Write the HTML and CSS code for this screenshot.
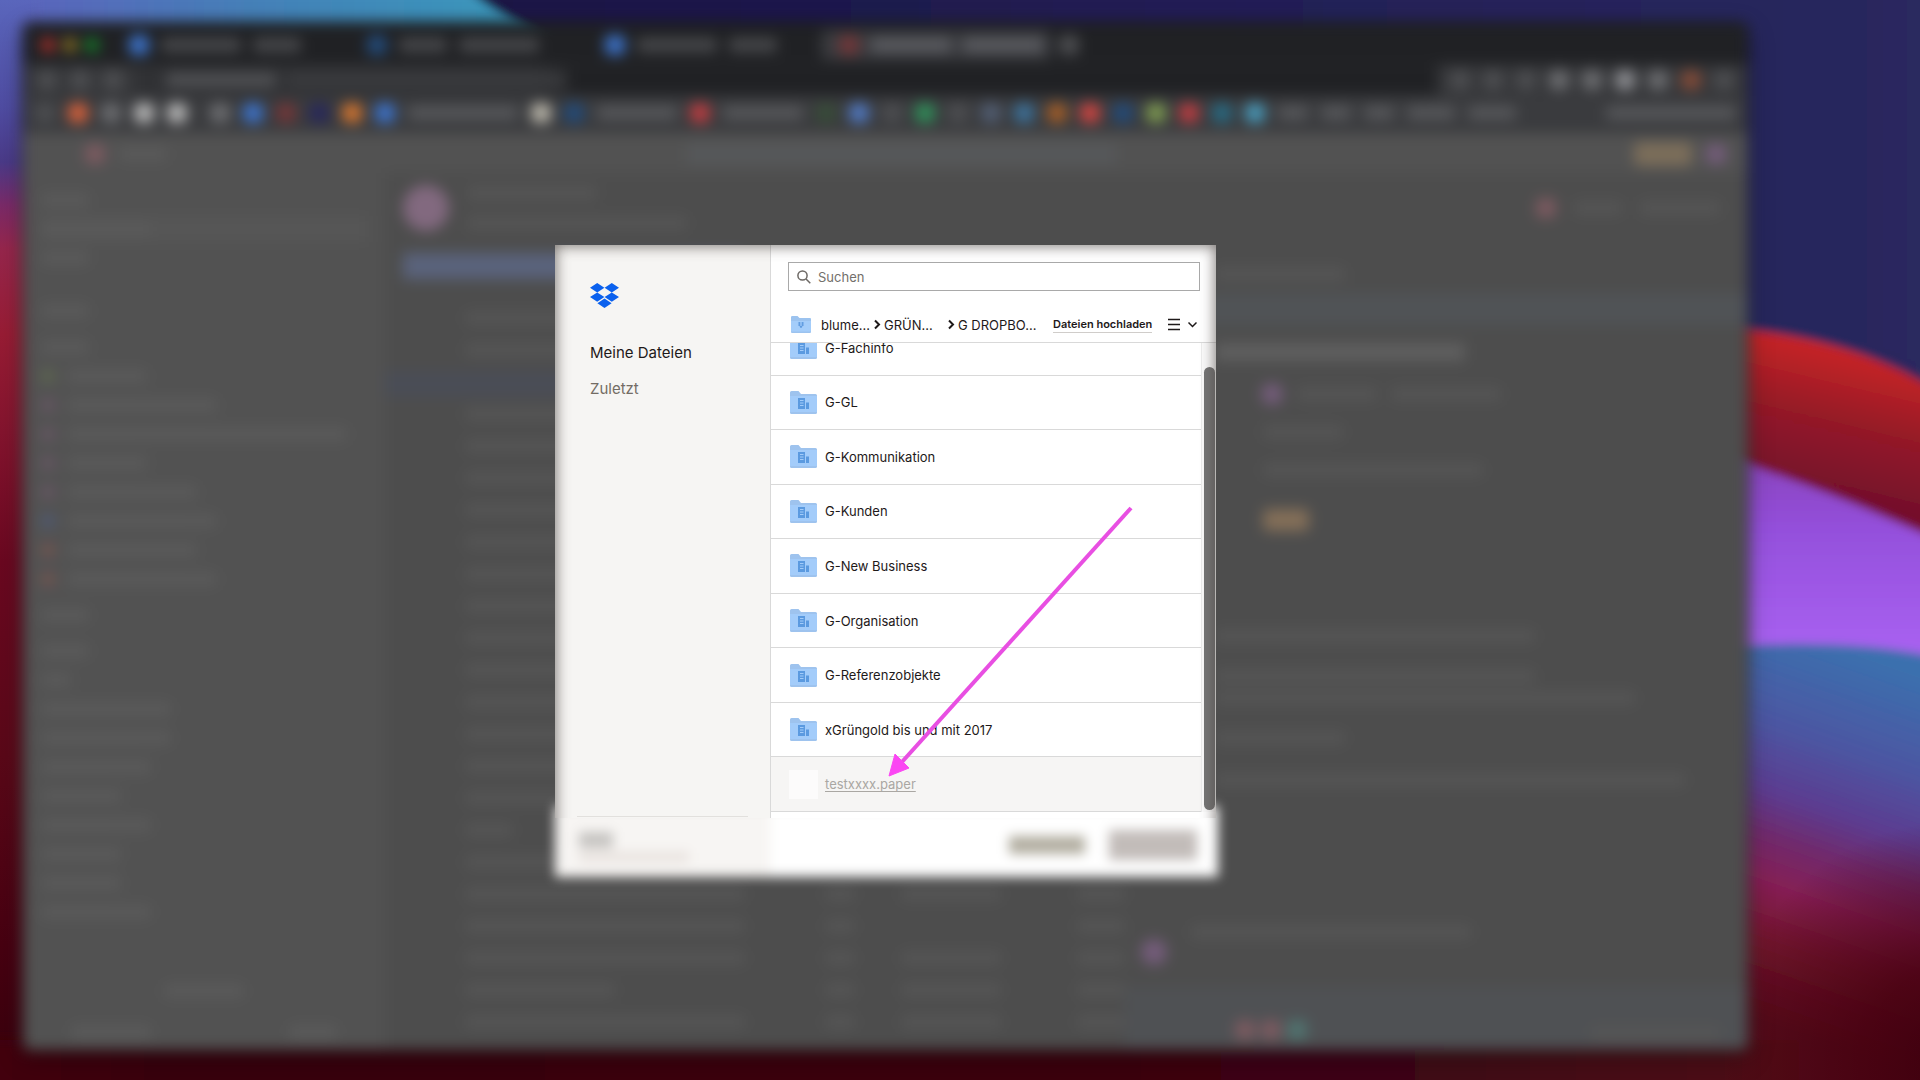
FILE: index.html
```html
<!DOCTYPE html>
<html lang="de">
<head>
<meta charset="utf-8">
<meta name="viewport" content="width=device-width, initial-scale=1">
<title>Meine Dateien</title>
<link rel="stylesheet" href="styles.css">
</head>
<body>
<div class="desktop">
  <svg class="wallpaper" viewBox="0 0 1920 1080" preserveAspectRatio="none" aria-hidden="true">
    <defs>
      <linearGradient id="base" x1="0" y1="0" x2="0" y2="1">
        <stop offset="0" stop-color="#5a66bc"/><stop offset=".1" stop-color="#4f4ca2"/><stop offset=".15" stop-color="#4a3a88"/><stop offset=".19" stop-color="#7a2a68"/>
        <stop offset=".23" stop-color="#96264c"/><stop offset=".31" stop-color="#981c34"/><stop offset=".4" stop-color="#84142e"/><stop offset=".52" stop-color="#6a0820"/>
        <stop offset=".7" stop-color="#5a0818"/><stop offset=".9" stop-color="#440010"/><stop offset="1" stop-color="#36000c"/>
      </linearGradient>
      <linearGradient id="sea" x1="0" y1="0" x2="1" y2="0"><stop offset="0" stop-color="#5a66bc"/><stop offset=".4" stop-color="#4580b8"/><stop offset="1" stop-color="#389cbc"/></linearGradient>
      <linearGradient id="night" x1="0" y1="0" x2="1" y2="0"><stop offset="0" stop-color="#1a1444"/><stop offset=".6" stop-color="#242058"/><stop offset="1" stop-color="#29295e"/></linearGradient>
      <linearGradient id="red" gradientUnits="userSpaceOnUse" x1="1850" y1="345" x2="1815" y2="490"><stop offset="0" stop-color="#cc2626"/><stop offset=".5" stop-color="#961a28"/><stop offset="1" stop-color="#74102a"/></linearGradient>
      <linearGradient id="violet" x1="0" y1="0" x2="0" y2="1"><stop offset="0" stop-color="#8038a4"/><stop offset=".5" stop-color="#9450dc"/><stop offset="1" stop-color="#aa62f2"/></linearGradient>
      <linearGradient id="dusk" gradientUnits="userSpaceOnUse" x1="1850" y1="650" x2="1725" y2="1010">
        <stop offset="0" stop-color="#3b70ae"/><stop offset=".25" stop-color="#4c56a2"/><stop offset=".42" stop-color="#5c3c90"/><stop offset=".53" stop-color="#702a6c"/>
        <stop offset=".65" stop-color="#851f54"/><stop offset=".78" stop-color="#741630"/><stop offset="1" stop-color="#560a1a"/>
      </linearGradient>
      <radialGradient id="corner" gradientUnits="userSpaceOnUse" cx="1960" cy="1060" r="240"><stop offset="0" stop-color="#3c000e"/><stop offset=".4" stop-color="#45000f" stop-opacity=".8"/><stop offset="1" stop-color="#45000f" stop-opacity="0"/></radialGradient>
      <linearGradient id="floor" x1="0" y1="0" x2="1" y2="0"><stop offset="0" stop-color="#440010"/><stop offset=".1" stop-color="#38000c"/><stop offset=".7" stop-color="#3c0612"/><stop offset=".88" stop-color="#4c0817"/><stop offset=".95" stop-color="#540a1a" stop-opacity="0"/></linearGradient>
      <filter id="soft" filterUnits="userSpaceOnUse" x="-60" y="-60" width="2060" height="1220"><feGaussianBlur stdDeviation="5"/></filter>
    </defs>
    <rect width="1920" height="1080" fill="url(#base)"/>
    <g filter="url(#soft)">
      <path d="M40-30H560V90H40Z" fill="url(#sea)"/>
      <path d="M450-30C490 20 540 30 620 80H1600V420H1950V-30Z" fill="url(#night)"/>
      <path d="M1600 650C1780 635 1860 635 1960 660V1120H1600Z" fill="url(#dusk)"/>
      <path d="M1600 400C1750 460 1850 500 1960 550V662C1860 638 1780 640 1600 655Z" fill="url(#violet)"/>
      <path d="M1600 325C1750 325 1850 330 1960 405V550C1850 500 1800 480 1600 415Z" fill="url(#red)"/>
      <path d="M-30 1040H1960V1120H-30Z" fill="url(#floor)"/>
    </g>
    <rect x="1700" y="800" width="220" height="280" fill="url(#corner)"/>
  </svg>

  <div class="stage">
    <div class="window" aria-hidden="true">
      <div class="tabs">
        <i class="light l-red"></i><i class="light l-amber"></i><i class="light l-green"></i>
        <span class="tab"><i class="dot blue"></i><i class="bar w80"></i><i class="bar w48"></i></span>
        <span class="tab"><i class="dot navy"></i><i class="bar w48"></i><i class="bar w80"></i></span>
        <span class="tab"><i class="dot blue"></i><i class="bar w80"></i><i class="bar w48"></i></span>
        <span class="tab current"><i class="dot maroon"></i><i class="bar w80"></i><i class="bar w80"></i></span>
        <i class="dot dim"></i>
      </div>
      <div class="address">
        <i class="dot dim"></i><i class="dot dim"></i><i class="dot dim"></i>
        <span class="url"><i class="bar w110"></i><i class="bar w280"></i></span>
        <span class="tools"><i class="dot dim"></i><i class="dot dim"></i><i class="dot dim"></i><i class="dot gray"></i><i class="dot gray"></i><i class="dot silver"></i><i class="dot gray"></i><i class="dot rust"></i><i class="dot dim"></i></span>
      </div>
      <div class="bookmarks">
        <i class="dot dim"></i><i class="dot coral"></i><i class="dot gray"></i><i class="dot white"></i><i class="dot white"></i><i class="dot gray gap"></i><i class="dot blue"></i><i class="dot maroon"></i><i class="dot indigo"></i><i class="dot orange"></i><i class="dot blue"></i><i class="bar w110"></i>
        <i class="dot cream"></i><i class="dot navy"></i><i class="bar w80"></i><i class="dot crimson"></i><i class="bar w80"></i><i class="dot moss"></i><i class="dot sky"></i><i class="dot dim"></i><i class="dot green"></i><i class="dot dim"></i><i class="dot slate"></i><i class="dot steel"></i><i class="dot brown"></i><i class="dot scarlet"></i><i class="dot navy"></i><i class="dot olive"></i><i class="dot crimson"></i><i class="dot teal"></i><i class="dot aqua"></i>
        <i class="bar w30"></i><i class="bar w30"></i><i class="bar w30"></i><i class="bar w48"></i><i class="bar w48"></i><i class="bar w130 last"></i>
      </div>
      <div class="app">
        <div class="appbar"><i class="dot rose"></i><i class="bar w48"></i><i class="finder"></i><i class="upgrade"></i><i class="dot plum"></i></div>
        <div class="side">
          <i class="bar w48"></i><i class="chosen"><i class="bar w110"></i></i><i class="bar w48"></i>
          <i class="bar w48 head"></i><i class="bar w48 part"></i>
          <span><i class="dot t-olive"></i><i class="bar w80"></i></span>
          <span><i class="dot t-plum"></i><i class="bar w150"></i></span>
          <span><i class="dot t-plum"></i><i class="bar w280"></i></span>
          <span><i class="dot t-plum"></i><i class="bar w80"></i></span>
          <span><i class="dot t-plum"></i><i class="bar w130"></i></span>
          <span><i class="dot t-blue"></i><i class="bar w150"></i></span>
          <span><i class="dot t-red"></i><i class="bar w130"></i></span>
          <span><i class="dot t-red"></i><i class="bar w150"></i></span>
          <i class="bar w48 part"></i><i class="bar w48 part"></i><i class="bar w30"></i><i class="bar w130"></i><i class="bar w130"></i><i class="bar w110"></i><i class="bar w80"></i><i class="bar w110"></i><i class="bar w80"></i><i class="bar w80"></i><i class="bar w110"></i>
          <i class="bar w80 middle"></i>
          <div class="pair"><i class="bar w80"></i><i class="bar w48"></i></div>
        </div>
        <div class="work">
          <div class="title"><i class="face"></i><span><i class="bar w130"></i><i class="bar w220"></i></span><i class="dot rose push"></i><i class="bar w48"></i><i class="bar w80"></i></div>
          <div class="tasks">
            <i class="create"></i>
            <i class="bar w110"></i><i class="bar w130"></i><i class="marked"></i>
            <i class="bar w280"></i><i class="bar w280"></i><i class="bar w280"></i><i class="bar w280"></i><i class="bar w280"></i><i class="bar w280"></i><i class="bar w280"></i><i class="bar w280"></i><i class="bar w280"></i><i class="bar w280"></i><i class="bar w280"></i><i class="bar w280"></i><i class="bar w280"></i><i class="bar w48"></i><i class="bar w280"></i>
            <div class="line"><i class="bar w280"></i><i class="bar w30"></i><i class="bar w80"></i><i class="bar w48"></i></div>
            <div class="line"><i class="bar w280"></i><i class="bar w30"></i><i class="blank"></i><i class="bar w48"></i></div>
            <div class="line"><i class="bar w280"></i><i class="bar w30"></i><i class="bar w80"></i><i class="bar w48"></i></div>
            <div class="line"><i class="bar w150"></i><i class="bar w30"></i><i class="bar w80"></i><i class="bar w48"></i></div>
            <div class="line"><i class="bar w280"></i><i class="bar w30"></i><i class="bar w130"></i><i class="bar w48"></i></div>
          </div>
          <div class="detail">
            <i class="bar w130"></i>
            <i class="notice"></i>
            <i class="bar heading"></i>
            <span class="who"><i class="dot plum"></i><i class="bar w80"></i><i class="bar w110"></i></span>
            <i class="bar w80 inner"></i><i class="bar w220 inner"></i><i class="chip"></i>
            <i class="bar w320 first"></i><i class="bar w320"></i><i class="bar w420"></i><i class="bar w130"></i><i class="bar w560"></i>
            <div class="comment"><i class="dot plum"></i><i class="bar w280"></i></div>
            <div class="members"><i class="dot rose"></i><i class="dot rose"></i><i class="dot mint"></i><i class="bar w130"></i></div>
          </div>
        </div>
      </div>
    </div>

    <main class="chooser" role="dialog" aria-label="Dateien">
      <div class="body">
        <nav class="nav">
          <svg class="logo" viewBox="0 0 29 25" role="img" aria-label="Dropbox"><path fill="#0b61ee" d="M7.2 0 14.4 4.7 7.2 9.4 0 4.7ZM21.8 0 29 4.7 21.8 9.4 14.6 4.7ZM7.2 9.4 14.4 14.1 7.2 18.8 0 14.1ZM21.8 9.4 29 14.1 21.8 18.8 14.6 14.1ZM14.5 15.5 21.6 20.2 14.5 25 7.4 20.2Z"/></svg>
          <a class="current" href="#files">Meine Dateien</a>
          <a href="#recent">Zuletzt</a>
        </nav>
        <section class="files" id="files">
          <label class="search">
            <svg viewBox="0 0 14 14" aria-hidden="true"><circle cx="5.5" cy="5.5" r="4.6"/><path d="m9 9 4.3 4.3"/></svg>
            <input type="search" placeholder="Suchen" aria-label="Suchen">
          </label>
          <div class="path">
            <svg class="home" viewBox="0 0 20 17" aria-hidden="true"><path fill="#9cc3ef" d="M0 1.2Q0 0 1.2 0H6.5L8.5 2H19Q20 2 20 3V16Q20 17 19 17H1Q0 17 0 16Z"/><path fill="#a4cdfa" d="M0 5H20V15.5H0Z"/><path fill="#5795dc" d="m8.4 6 1.6 1-1.6 1-1.6-1Zm3.2 0 1.6 1-1.6 1L10 7ZM8.4 8 10 9 8.4 10 6.8 9Zm3.2 0 1.6 1-1.6 1L10 9ZM10 9.8l1.6 1L10 12l-1.6-1.200Z"/></svg>
            <a class="c1" href="#blume">blume...</a>
            <svg class="sep" viewBox="0 0 6 9" aria-hidden="true"><path d="m1 .5 4 4-4 4"/></svg>
            <a class="c2" href="#gruen">GRÜN...</a>
            <svg class="sep" viewBox="0 0 6 9" aria-hidden="true"><path d="m1 .5 4 4-4 4"/></svg>
            <a class="c3" href="#dropbox">G DROPBO...</a>
            <button class="upload" type="button">Dateien hochladen</button>
            <button class="view" type="button" aria-label="Ansicht">
              <svg viewBox="0 0 29 13" aria-hidden="true"><path d="M0 1.500H12M0 6.500H12M0 11.500H12M20.500 4.500l4 4 4-4"/></svg>
            </button>
          </div>
          <div class="scroller">
            <svg class="defs" aria-hidden="true"><symbol id="folder" viewBox="0 0 27 23"><path fill="#9ec3ee" d="M0 1.500Q0 0 1.500 0H8.500L11 3H25.500Q27 3 27 4.500V21.500Q27 23 25.500 23H1.500Q0 23 0 21.500Z"/><path fill="#a3ccfa" d="M0 5H27V21H0Z"/><path fill="#5b9ae0" d="M8 7H15V18H8ZM16 11.500H19V18H16Z"/><path stroke="#a3ccfa" d="M10 9.500H13.500M10 12H13.500M10 14.500H13.500"/></symbol></svg>
            <ul class="list">
              <li><svg aria-hidden="true"><use href="#folder"/></svg><a href="#fachinfo">G-Fachinfo</a></li>
              <li><svg aria-hidden="true"><use href="#folder"/></svg><a href="#gl">G-GL</a></li>
              <li><svg aria-hidden="true"><use href="#folder"/></svg><a href="#kommunikation">G-Kommunikation</a></li>
              <li><svg aria-hidden="true"><use href="#folder"/></svg><a href="#kunden">G-Kunden</a></li>
              <li><svg aria-hidden="true"><use href="#folder"/></svg><a href="#business">G-New Business</a></li>
              <li><svg aria-hidden="true"><use href="#folder"/></svg><a href="#organisation">G-Organisation</a></li>
              <li><svg aria-hidden="true"><use href="#folder"/></svg><a href="#referenz">G-Referenzobjekte</a></li>
              <li><svg aria-hidden="true"><use href="#folder"/></svg><a href="#archiv">xGrüngold bis und mit 2017</a></li>
              <li class="paper"><i></i><a href="#test">testxxxx.paper</a></li>
            </ul>
            <div class="track"><i class="thumb"></i></div>
          </div>
        </section>
      </div>
      <footer class="foot">
        <div class="account"><i class="name"></i><i class="mail"></i></div>
        <div class="actions"><button class="cancel" type="button" aria-label="Abbrechen"></button><button class="choose" type="button" aria-label="Auswählen"></button></div>
      </footer>
      <svg class="arrow" viewBox="0 0 246 274" aria-hidden="true"><path stroke="#e84fe2" stroke-width="4" d="M244 4 14 259"/><path fill="#fb47f3" d="M2 272 8 250 22 264Z" stroke="#fb47f3"/></svg>
    </main>
  </div>
</div>
</body>
</html>
```
FILE: styles.css
```css
* { box-sizing: border-box; }
body { margin: 0; font-family: Inter, "Liberation Sans", sans-serif; font-size: 13px; color: #1e1919; }
i { display: block; flex: none; }
a { color: inherit; text-decoration: none; }
button { border: 0; padding: 0; background: none; font: inherit; color: inherit; }

.desktop { position: relative; min-height: 100vh; overflow: hidden; background: #29295e; }
.wallpaper { position: absolute; inset: 0; width: 100%; height: 100%; }
.stage { position: absolute; inset: 22px 172px 30px 23px; display: flex; justify-content: center; align-items: flex-start; padding-top: 223px; }

/* Browser window, out of focus */
.window { position: absolute; inset: 0; display: flex; flex-direction: column; overflow: hidden; border-radius: 8px; background: #4d4d4d; filter: blur(7px) drop-shadow(0 8px 10px rgba(0, 0, 0, .35)); }
.dot { width: 20px; height: 20px; border-radius: 6px; }
.bar { height: 14px; border-radius: 4px; background: #5a5a5a; }
.w30 { width: 30px; } .w48 { width: 48px; } .w80 { width: 80px; } .w110 { width: 110px; } .w130 { width: 130px; }
.w150 { width: 150px; } .w220 { width: 220px; } .w280 { width: 280px; } .w320 { width: 320px; } .w420 { width: 420px; } .w560 { width: 560px; }

.tabs { flex: none; display: flex; align-items: center; gap: 8px; height: 42px; padding: 4px 18px 0; background: #202124; }
.light { width: 14px; height: 14px; border-radius: 7px; }
.l-red { background: #b83028; } .l-amber { background: #907820; } .l-green { background: #148828; }
.tab { display: flex; align-items: center; gap: 12px; width: 230px; height: 30px; padding-left: 22px; }
.tab .bar { background: #47484b; }
.tab.current { background: #3a3b3f; border-radius: 6px; padding-left: 18px; }
.tab.current .bar { background: #5a5b60; }
.address { flex: none; display: flex; align-items: center; gap: 13px; height: 32px; padding: 0 14px; background: #36373a; }
.url { flex: 1; display: flex; align-items: center; gap: 10px; height: 30px; padding-left: 30px; background: linear-gradient(90deg, #303134 400px, #202124 440px); }
.url .bar { background: #505154; }
.url .w280 { background: #3a3b3e; }
.tools { display: flex; gap: 13px; }
.bookmarks { flex: none; display: flex; align-items: center; gap: 13px; height: 37px; padding: 0 12px 4px; background: #3a3b3e; }
.bookmarks .bar { background: #56575a; }
.gap { margin-left: 10px; }
.last { margin-left: auto; }
.blue { background: #3c72c8; } .navy { background: #234a78; } .maroon { background: #703638; } .dim { background: #4c4d50; }
.gray { background: #6a6b6e; } .silver { background: #8a8b8f; } .rust { background: #804a38; } .coral { background: #d2603c; }
.white { background: #b4b4b4; } .indigo { background: #28285a; } .orange { background: #d07430; } .cream { background: #b8b4a8; }
.crimson { background: #b83c40; } .moss { background: #384c38; } .sky { background: #5078c0; } .green { background: #308c58; }
.slate { background: #505c70; } .steel { background: #3c7098; } .brown { background: #a05c28; } .scarlet { background: #cc4440; }
.olive { background: #7c9850; } .teal { background: #286880; } .aqua { background: #4898b8; }
.rose { background: #7c5a60; } .plum { background: #745c7a; } .mint { background: #507470; }
.t-olive { background: #5e6850; } .t-plum { background: #685664; } .t-blue { background: #505a74; } .t-red { background: #745450; }

.app { flex: 1; display: grid; grid-template: 40px 1fr / 362px 1fr; min-height: 0; }
.appbar { grid-column: 1 / -1; display: flex; align-items: center; gap: 14px; padding: 2px 22px 0 62px; background: #525252; }
.finder { width: 430px; height: 20px; margin-left: auto; background: #56585a; }
.upgrade { width: 58px; height: 24px; margin-left: auto; border-radius: 5px; background: #7c6e5a; }
.side { display: flex; flex-direction: column; gap: 15px; padding: 20px 18px 0; background: #525252; }
.side span { display: flex; align-items: center; gap: 12px; height: 14px; }
.side .dot { width: 14px; height: 14px; }
.side .w280 { width: 280px; }
.side .head { margin-top: 24px; }
.side .part { margin-top: 7px; }
.chosen { height: 26px; margin: -6px 0; padding: 6px 0; background: #565656; }
.middle { margin: 50px auto 0; }
.pair { display: flex; justify-content: space-between; margin-top: 12px; padding: 0 30px; }

.work { display: grid; grid-template: 66px 1fr / 740px 1fr; min-width: 0; }
.title { grid-column: 1 / -1; display: flex; align-items: center; gap: 18px; padding: 4px 28px 0 18px; }
.title span { display: grid; gap: 16px; }
.face { width: 46px; height: 46px; border-radius: 23px; background: #82697f; }
.push { margin-left: auto; }
.work .bar { background: #555; }
.tasks { display: flex; flex-direction: column; gap: 18px; padding: 14px 0 0 80px; }
.create { width: 340px; height: 26px; margin-left: -62px; background: #5a637c; }
.tasks > .w110 { margin-top: 14px; }
.marked { width: 340px; height: 26px; margin: -4px 0 -8px -80px; background: #4a4d56; }
.line { display: flex; gap: 26px; }
.line > :nth-child(2) { margin-right: 20px; }
.line > :first-child { margin-right: auto; }
.line .w80, .line .w130, .blank { width: 100px; margin-right: 50px; }
.detail { display: flex; flex-direction: column; gap: 8px; padding: 10px 0 0; }
.detail > .bar { margin-left: 90px; }
.notice { height: 32px; margin-top: 4px; background: #505356; }
.work .heading { width: 250px; height: 18px; margin-top: 10px; background: #5f5f5f; }
.who { display: flex; align-items: center; gap: 14px; margin: 14px 0 0 136px; }
.who .dot { width: 22px; height: 22px; border-radius: 11px; }
.detail > .inner { margin: 12px 0 4px 138px; }
.chip { width: 46px; height: 22px; margin: 20px 0 0 138px; border-radius: 5px; background: #846f58; }
.detail > .first { margin-top: 90px; margin-bottom: 18px; }
.detail > .w130 { margin-top: 18px; }
.detail > .w560 { width: 470px; margin-top: 20px; }
.comment { display: flex; gap: 24px; margin: 130px 0 0 16px; }
.comment .dot { width: 26px; height: 26px; border-radius: 13px; margin-top: 14px; }
.members { display: flex; gap: 6px; align-items: flex-end; flex: 1; padding: 0 28px 10px 110px; margin-top: 14px; background: #4f5154; }
.members .bar { margin-left: auto; }

/* File chooser */
.chooser { position: relative; width: 661px; }
.body { position: relative; z-index: 1; display: flex; height: 573px; overflow: hidden; background: #f6f5f3; }
.body::after { content: ""; position: absolute; inset: 0 0 -30px; box-shadow: inset 0 0 14px 1px rgba(70, 62, 60, .7); pointer-events: none; }
.nav { position: relative; width: 215px; padding: 38px 35px; display: flex; flex-direction: column; align-items: flex-start; font-size: 15px; line-height: 20px; color: #736c64; }
.nav::after { content: ""; position: absolute; inset: auto 22px 1px; height: 1px; background: #e2e0dd; }
.nav .current { margin: 35px 0 16px; color: #1e1919; }
.logo { width: 29px; height: 25px; }
.files { flex: 1; display: flex; flex-direction: column; min-width: 0; border-left: 1px solid #d9d9d9; background: #fff; }
.search { flex: none; display: flex; align-items: center; gap: 7px; height: 29px; margin: 17px 16px 0 17px; padding-left: 8px; border: 1px solid #a9a9a9; }
.search svg { width: 14px; height: 14px; fill: none; stroke: #6c6864; stroke-width: 1.500; }
.search input { flex: 1; min-width: 0; border: 0; padding: 0; outline: 0; background: none; font: 13px Inter, sans-serif; color: #1e1919; }
.search input::placeholder { color: #736f6b; opacity: 1; }
.path { flex: none; display: flex; align-items: center; height: 52px; padding: 16px 19px 0 20px; border-bottom: 1px solid #d9d9d9; white-space: nowrap; }
.home { width: 20px; height: 17px; margin-right: 10px; }
.c1 { width: 53px; } .c2 { width: 64px; } .c3 { width: 95px; }
.sep { width: 6px; height: 9px; margin-right: 4px; fill: none; stroke: #1e1919; stroke-width: 2; overflow: visible; }
.upload { font-size: 11px; font-weight: 600; line-height: 16px; border-bottom: 1px solid #d0cdca; }
.view { margin-left: auto; display: flex; }
.view svg { width: 29px; height: 13px; fill: none; stroke: #1e1919; stroke-width: 1.500; }
.scroller { flex: none; display: flex; align-items: flex-end; height: 469px; overflow: hidden; }
.defs { position: absolute; width: 0; height: 0; }
.list { flex: 1; display: grid; grid-auto-rows: 1fr; height: 491px; margin: 0; padding: 0; list-style: none; }
.list li { display: flex; align-items: center; gap: 8px; padding-left: 19px; border-bottom: 1px solid #d9d9d9; }
.list svg { width: 27px; height: 23px; }
.list .paper { background: #f6f5f4; color: #aaa7a3; }
.paper a { text-decoration: underline; text-underline-offset: 2px; }
.paper i { width: 29px; height: 29px; margin: 0 -1px; background: #fcfbfb; }
.track { width: 15px; height: 469px; padding: 24px 1px 2px 2px; border-left: 1px solid #ececec; background: #fafafa; }
.thumb { height: 100%; border-radius: 6px; background: #757575; }
.foot { display: flex; height: 71px; margin: -12px -2px 0 0; background: linear-gradient(90deg, #f7f5f3 215px, #fff 216px); filter: blur(6px); }
.account { width: 215px; padding: 26px 24px 0; }
.name { width: 34px; height: 16px; background: #c6c4c1; }
.mail { width: 110px; height: 10px; margin-top: 4px; background: #e8e2de; }
.actions { flex: 1; display: flex; justify-content: flex-end; align-items: center; gap: 24px; padding: 6px 21px 0 0; }
.cancel { width: 76px; height: 18px; background: #b3afa2; }
.choose { width: 88px; height: 30px; background: #c2bcb9; }
.arrow { position: absolute; z-index: 2; left: 332px; top: 259px; width: 246px; height: 274px; fill: none; }
```
